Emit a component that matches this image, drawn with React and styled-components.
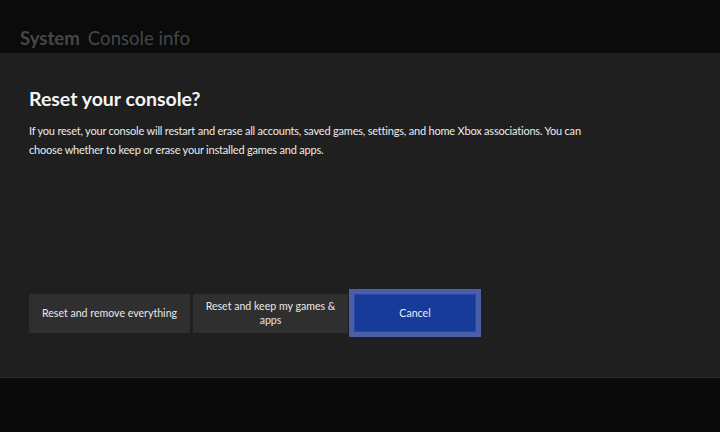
import React from "react";
import styled, { createGlobalStyle } from "styled-components";

const Global = createGlobalStyle`
  html, body { margin: 0; padding: 0; background: #0a0a0a; }
  body { font-family: Lato, "Open Sans", sans-serif; -webkit-font-smoothing: antialiased; }
  * { box-sizing: border-box; }
`;

const Screen = styled.div`
  width: 720px;
  height: 432px;
  display: flex;
  flex-direction: column;
  background: #0a0a0a;
  overflow: hidden;
`;

const Header = styled.header`
  height: 53px;
  flex: none;
  background: #0b0b0b;
  display: flex;
  align-items: flex-end;
  padding: 0 0 4px 20px;
  gap: 8px;
  font-size: 18.6px;
  color: #464646;
`;

const Crumb = styled.span`
  font-weight: ${(p) => (p.$strong ? 700 : 400)};
`;

const Panel = styled.main`
  flex: none;
  height: 325px;
  background: #1f1f1f;
  border-bottom: 1px solid #2a2a2a;
  display: flex;
  flex-direction: column;
  padding: 31px 29px 40px 29px;
`;

const Title = styled.h1`
  margin: 0;
  font-size: 19.5px;
  font-weight: 700;
  color: #f4f4f4;
  line-height: 30px;
`;

const Body = styled.p`
  margin: 7px 0 0 0;
  width: 570px;
  font-size: 11px;
  letter-spacing: -0.2px;
  line-height: 19px;
  color: #ececec;
`;

const Spacer = styled.div`
  flex: 1;
`;

const Actions = styled.div`
  display: flex;
  align-items: center;
  gap: 3px;
`;

const ActionButton = styled.button`
  width: ${(p) => p.$w}px;
  height: 39px;
  border: none;
  background: #2f2f2f;
  color: #e8e8e8;
  font-family: inherit;
  font-size: 10.6px;
  line-height: 14px;
  padding: 0 10px;
  text-align: center;
`;

const FocusButton = styled.button`
  width: 132px;
  height: 48px;
  margin-left: -2px;
  border: 5px solid #4a5fa9;
  background: #183a98;
  color: #e8ecf8;
  font-family: inherit;
  font-size: 10.6px;
  padding: 0;
  box-shadow: inset 0 0 0 1px #2b46a0;
`;

const Footer = styled.footer`
  flex: 1;
  background: #0a0a0a;
`;

export default function App() {
  return (
    <>
      <Global />
      <Screen>
        <Header>
          <Crumb $strong>System</Crumb>
          <Crumb>Console info</Crumb>
        </Header>
        <Panel>
          <Title>Reset your console?</Title>
          <Body>
            If you reset, your console will restart and erase all accounts, saved games, settings, and home Xbox associations. You can choose whether to keep or erase your installed games and apps.
          </Body>
          <Spacer />
          <Actions>
            <ActionButton $w={161}>Reset and remove everything</ActionButton>
            <ActionButton $w={155}>Reset and keep my games &amp; apps</ActionButton>
            <FocusButton>Cancel</FocusButton>
          </Actions>
        </Panel>
        <Footer />
      </Screen>
    </>
  );
}
